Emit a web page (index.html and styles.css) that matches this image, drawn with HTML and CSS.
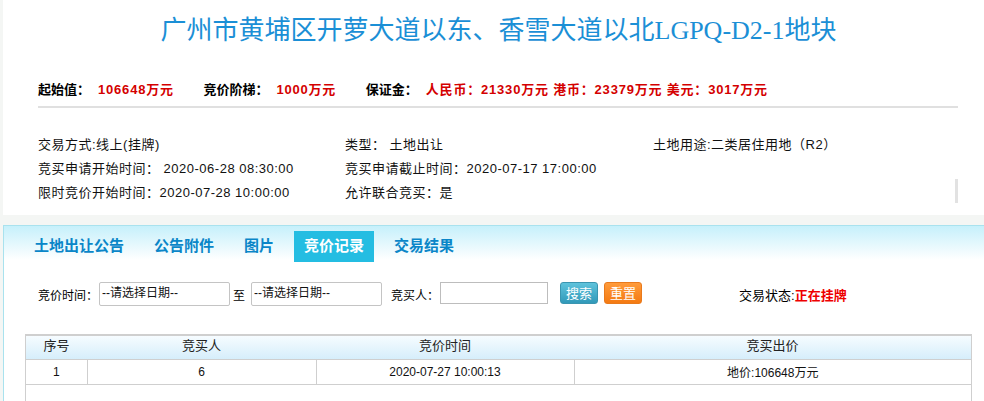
FILE: index.html
```html
<!DOCTYPE html>
<html lang="zh-CN">
<head>
<meta charset="utf-8">
<title>地块详情</title>
<link rel="stylesheet" href="styles.css">
</head>
<body>
<div class="page">
  <section class="top-panel">
    <h1 class="title">广州市黄埔区开萝大道以东、香雪大道以北LGPQ-D2-1地块</h1>
    <div class="inner">
      <div class="fees">
        <span class="grp"><span class="lbl">起始值：</span><span class="val">106648万元</span></span>
        <span class="grp"><span class="lbl">竞价阶梯：</span><span class="val">1000万元</span></span>
        <span class="grp"><span class="lbl">保证金：</span><span class="val">人民币：21330万元 港币：23379万元 美元：3017万元</span></span>
      </div>
      <div class="info">
        <div>交易方式:线上(挂牌)</div>
        <div>类型：&nbsp;土地出让</div>
        <div>土地用途:二类居住用地（R2）</div>
        <div>竞买申请开始时间：&nbsp;2020-06-28 08:30:00</div>
        <div>竞买申请截止时间：2020-07-17 17:00:00</div>
        <div></div>
        <div>限时竞价开始时间：2020-07-28 10:00:00</div>
        <div>允许联合竞买：是</div>
        <div></div>
      </div>
    </div>
    <div class="scroll-stub"></div>
  </section>

  <section class="tab-panel">
    <nav class="tabs">
      <span class="tab">土地出让公告</span>
      <span class="tab">公告附件</span>
      <span class="tab">图片</span>
      <span class="tab active">竞价记录</span>
      <span class="tab">交易结果</span>
    </nav>
    <div class="search">
      <span class="s-lbl">竞价时间：</span>
      <input class="date" type="text" value="--请选择日期--">
      <span class="to">至</span>
      <input class="date" type="text" value="--请选择日期--">
      <span class="s-lbl buyer-lbl">竞买人：</span>
      <input class="buyer" type="text" value="">
      <button class="btn btn-blue" type="button">搜索</button>
      <button class="btn btn-orange" type="button">重置</button>
      <span class="status">交易状态:<b>正在挂牌</b></span>
    </div>
    <div class="table-wrap">
      <table class="records">
        <colgroup>
          <col class="c1"><col class="c2"><col class="c3"><col class="c4">
        </colgroup>
        <thead>
          <tr><th>序号</th><th>竞买人</th><th>竞价时间</th><th>竞买出价</th></tr>
        </thead>
        <tbody>
          <tr><td>1</td><td>6</td><td>2020-07-27 10:00:13</td><td>地价:106648万元</td></tr>
        </tbody>
      </table>
    </div>
  </section>
</div>
</body>
</html>
```

FILE: styles.css
```css
* { box-sizing: border-box; }
html, body { margin: 0; padding: 0; }
body {
  background: #f4f6f4;
  font-family: "Liberation Sans", "Noto Sans CJK SC", sans-serif;
  font-size: 13px;
  color: #000;
  overflow: hidden;
}
.page { padding-left: 3px; }

.top-panel {
  position: relative;
  background: #fff;
  height: 215px;
}
.title {
  margin: 0;
  padding-top: 12px;
  padding-left: 10px;
  font-family: "Liberation Serif", "Noto Sans CJK SC", serif;
  font-weight: normal;
  font-size: 26px;
  line-height: 38px;
  color: #1b8fd6;
  text-align: center;
}
.inner {
  margin-left: 35px;
  width: 920px;
}
.fees {
  margin-top: 30px;
  padding-bottom: 6px;
  border-bottom: 2px solid #e0e0e0;
  font-weight: bold;
  line-height: 20px;
  white-space: nowrap;
}
.fees .grp { margin-right: 26px; }
.fees .lbl { color: #000; margin-right: 8px; }
.fees .val { color: #d40000; letter-spacing: 0.8px; }

.info {
  margin-top: 25px;
  display: grid;
  grid-template-columns: 307px 308px 1fr;
  line-height: 24px;
  color: #111;
  font-size: 13px;
  letter-spacing: 0.5px;
}
.scroll-stub {
  position: absolute;
  left: 952px;
  top: 179px;
  width: 3px;
  height: 24px;
  background: #e2e2e2;
}

.tab-panel {
  margin-top: 10px;
  border-top: 1px solid #a9e2ee;
  border-left: 1px solid #a9e2ee;
  background: linear-gradient(#c6f0fb 0px, #ffffff 34px) no-repeat, #fff;
  height: 200px;
}
.tabs {
  display: flex;
  gap: 10px;
  padding: 5px 0 0 20px;
}
.tab {
  height: 31px;
  line-height: 29px;
  padding: 0 10px;
  font-size: 15px;
  font-weight: bold;
  color: #0a86c8;
}
.tab.active {
  background: #24bde2;
  color: #fff;
}

.search {
  display: flex;
  align-items: center;
  margin-top: 20px;
  padding-left: 34px;
  height: 24px;
  font-size: 12px;
}
.date {
  width: 131px;
  height: 24px;
  margin-left: 1px;
  border: 1px solid #c4c4c4;
  border-radius: 2px;
  padding: 0 2px 6px;
  font: 12px "Liberation Sans", "Noto Sans CJK SC", sans-serif;
  color: #111;
  background: #fff;
}
.to { margin: 0 5px 0 3px; }
.buyer-lbl { margin-left: 9px; margin-right: 1px; }
.buyer {
  width: 108px;
  height: 22px;
  margin-top: -2px;
  border: 1px solid #bdbdbd;
  background: #fff;
}
.btn {
  height: 22px;
  width: 38px;
  padding: 0;
  margin-top: -2px;
  border-radius: 3px;
  font: 13px "Noto Sans CJK SC", sans-serif;
  color: #fff;
  line-height: 20px;
}
.btn-blue {
  margin-left: 12px;
  background: linear-gradient(#5ec3dc, #3199b9);
  border: 1px solid #3a95b0;
}
.btn-orange {
  margin-left: 6px;
  background: linear-gradient(#ff9b3b, #f47a12);
  border: 1px solid #e97a1c;
}
.status { margin-left: 97px; font-size: 13px; }
.status b { color: #ee0000; font-size: 13px; }

.table-wrap {
  margin: 28px 0 0 21px;
  width: 947px;
  height: 120px;
  border-left: 1px solid #cfcfcf;
  border-right: 1px solid #cfcfcf;
  border-top: 2px solid #cfcfcf;
}
.records {
  width: 100%;
  border-collapse: collapse;
  table-layout: fixed;
}
.c1 { width: 61px; }
.c2 { width: 229px; }
.c3 { width: 258px; }
.c4 { width: auto; }
.records th {
  height: 23px;
  font-weight: normal;
  font-size: 13px;
  line-height: 18px;
  color: #222;
  background: linear-gradient(#f6fcff, #d6eefb);
  border-bottom: 1px solid #cfcfcf;
  padding: 0 0 3px;
}
.records td {
  height: 25px;
  font-size: 12px;
  text-align: center;
  color: #111;
  border: 1px solid #cfcfcf;
  border-top: 0;
  padding: 0;
}
.records td:first-child { border-left: 0; }
.records td:last-child { border-right: 0; }
```
